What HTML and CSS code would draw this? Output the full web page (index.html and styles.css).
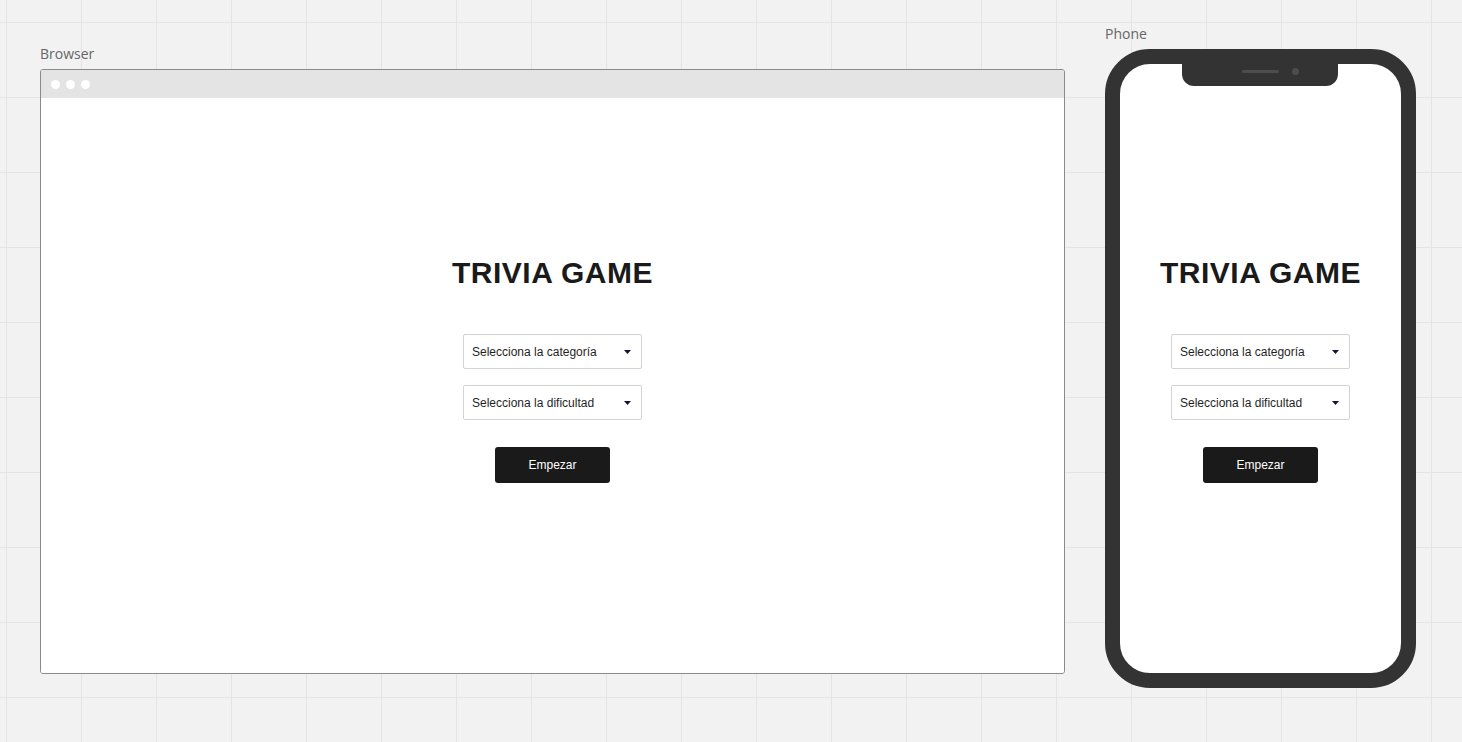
FILE: index.html
```html
<!DOCTYPE html>
<html lang="es">
<head>
<meta charset="utf-8">
<title>Trivia Game wireframe</title>
<link rel="stylesheet" href="styles.css">
</head>
<body>
<div class="canvas">
  <section class="board board-browser">
    <div class="label">Browser</div>
    <div class="browser">
      <div class="browser-bar">
        <span class="dot"></span><span class="dot"></span><span class="dot"></span>
      </div>
      <div class="browser-view">
        <div class="app app-browser">
          <h1 class="title">TRIVIA GAME</h1>
          <div class="select"><span>Selecciona la categoría</span><svg class="caret" width="7" height="4" viewBox="0 0 7 4"><path d="M0 0H7L3.5 4Z"/></svg></div>
          <div class="select select-second"><span>Selecciona la dificultad</span><svg class="caret" width="7" height="4" viewBox="0 0 7 4"><path d="M0 0H7L3.5 4Z"/></svg></div>
          <button class="btn">Empezar</button>
        </div>
      </div>
    </div>
  </section>
  <section class="board board-phone">
    <div class="label">Phone</div>
    <div class="phone">
      <div class="screen">
        <div class="notch"><span class="speaker"></span><span class="camera"></span></div>
        <div class="app app-phone">
          <h1 class="title">TRIVIA GAME</h1>
          <div class="select"><span>Selecciona la categoría</span><svg class="caret" width="7" height="4" viewBox="0 0 7 4"><path d="M0 0H7L3.5 4Z"/></svg></div>
          <div class="select select-second"><span>Selecciona la dificultad</span><svg class="caret" width="7" height="4" viewBox="0 0 7 4"><path d="M0 0H7L3.5 4Z"/></svg></div>
          <button class="btn">Empezar</button>
        </div>
      </div>
    </div>
  </section>
</div>
</body>
</html>
```
FILE: styles.css
```css
html, body {
  margin: 0;
  padding: 0;
}
body {
  width: 1462px;
  height: 742px;
  overflow: hidden;
  background-color: #f2f2f2;
  background-image:
    linear-gradient(to right, #e4e4e4 1px, transparent 1px),
    linear-gradient(to bottom, #e4e4e4 1px, transparent 1px);
  background-size: 75px 75px;
  background-position: 6px 22px;
  font-family: "Liberation Sans", Arial, sans-serif;
}
.canvas {
  display: flex;
  align-items: flex-start;
  gap: 40px;
  padding-left: 40px;
}
.board {
  display: flex;
  flex-direction: column;
}
.board-browser { padding-top: 44px; }
.board-phone { padding-top: 24px; }
.label {
  font-family: "Open Sans", sans-serif;
  font-size: 14px;
  line-height: 20px;
  color: #666;
  margin-bottom: 5px;
}
.browser {
  width: 1025px;
  height: 605px;
  box-sizing: border-box;
  border: 1px solid #8a8a8a;
  border-radius: 3px;
  overflow: hidden;
  display: flex;
  flex-direction: column;
}
.browser-bar {
  height: 28px;
  flex: none;
  background: #e4e4e4;
  display: flex;
  align-items: center;
  gap: 6px;
  padding-left: 9.5px;
}
.dot {
  width: 9px;
  height: 9px;
  border-radius: 50%;
  background: #fff;
}
.browser-view {
  flex: 1;
  background: #fff;
}
.app {
  display: flex;
  flex-direction: column;
  align-items: center;
}
.app-browser { padding-top: 157px; }
.app-phone { padding-top: 191px; }
.title {
  margin: 0;
  font-size: 30px;
  line-height: 36px;
  font-weight: 700;
  color: #1a1a1a;
  letter-spacing: 0.5px;
}
.select {
  margin-top: 43px;
  width: 179px;
  height: 35px;
  box-sizing: border-box;
  border: 1px solid #d3d3d3;
  border-radius: 2px;
  padding: 0 10px 0 8px;
  display: flex;
  align-items: center;
  justify-content: space-between;
  font-size: 12px;
  color: #1f1f1f;
  background: #fff;
}
.select-second { margin-top: 16px; }
.caret { fill: #14143a; }
.btn {
  margin-top: 27px;
  width: 115px;
  height: 36px;
  border: none;
  border-radius: 3px;
  background: #1a1a1a;
  color: #fff;
  font-family: "Liberation Sans", Arial, sans-serif;
  font-size: 12px;
  padding: 0;
}
.phone {
  width: 311px;
  height: 639px;
  box-sizing: border-box;
  border: 15px solid #333;
  border-radius: 45px;
  background: #fff;
  overflow: hidden;
}
.screen {
  position: relative;
  height: 100%;
}
.notch {
  position: absolute;
  top: 0;
  left: 62px;
  width: 156px;
  height: 22px;
  box-sizing: border-box;
  padding: 0 0 8px 60px;
  background: #333;
  border-radius: 0 0 12px 12px;
  display: flex;
  align-items: center;
  gap: 12.5px;
}
.speaker {
  width: 37px;
  height: 3px;
  border-radius: 2px;
  background: #4d4d4d;
}
.camera {
  width: 7px;
  height: 7px;
  border-radius: 50%;
  background: #4d4d4d;
}
```
